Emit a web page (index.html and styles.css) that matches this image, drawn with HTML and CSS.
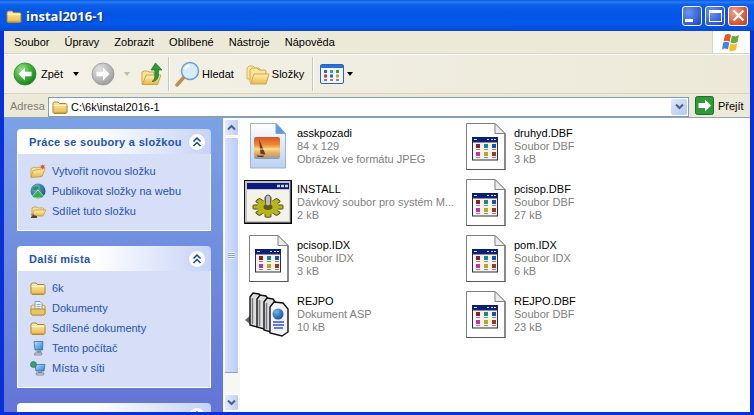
FILE: index.html
```html
<!DOCTYPE html>
<html lang="cs">
<head>
    <meta charset="UTF-8">
    <meta name="viewport" content="width=device-width, initial-scale=1.0">
    <title>instal2016-1</title>
    <link rel="stylesheet" href="styles.css">
</head>
<body>

    <svg class="svg-defs" xmlns="http://www.w3.org/2000/svg">
        <defs>
            <radialGradient id="g-green" cx="35%" cy="30%" r="80%">
                <stop offset="0" stop-color="#9be08c"/><stop offset=".5" stop-color="#3fb03a"/><stop offset="1" stop-color="#0e7a1e"/>
            </radialGradient>
            <radialGradient id="g-gray" cx="35%" cy="30%" r="80%">
                <stop offset="0" stop-color="#e2e2e2"/><stop offset=".6" stop-color="#b6b6b6"/><stop offset="1" stop-color="#939393"/>
            </radialGradient>
            <linearGradient id="g-folder" x1="0" y1="0" x2="0" y2="1">
                <stop offset="0" stop-color="#fff0b0"/><stop offset="1" stop-color="#e8b84a"/>
            </linearGradient>
            <linearGradient id="g-sunset" x1="0" y1="0" x2="0" y2="1">
                <stop offset="0" stop-color="#d9552a"/><stop offset=".35" stop-color="#ee8a35"/><stop offset=".55" stop-color="#f8d27a"/><stop offset=".75" stop-color="#e8a860"/><stop offset="1" stop-color="#7f9fb0"/>
            </linearGradient>
            <linearGradient id="g-page" x1="0" y1="0" x2="0" y2="1">
                <stop offset="0" stop-color="#ffffff"/><stop offset="1" stop-color="#bcd0f2"/>
            </linearGradient>
            <radialGradient id="g-globe" cx="35%" cy="30%" r="80%">
                <stop offset="0" stop-color="#6fb8ea"/><stop offset="1" stop-color="#0f4590"/>
            </radialGradient>
            <linearGradient id="g-monitor" x1="0" y1="0" x2="1" y2="1">
                <stop offset="0" stop-color="#b6e2fb"/><stop offset="1" stop-color="#2a7fd0"/>
            </linearGradient>

            <symbol id="i-folder" viewBox="0 0 16 16">
                <path d="M1 13.500V4.200L2.200 3h4l1.200 1.500h6.400l1.200 1v8l-1 1H2z" fill="url(#g-folder)" stroke="#a8822a" stroke-width="1"/>
                <path d="M1.500 6.500h13" stroke="#fff6cc" stroke-width="1"/>
                <path d="M2 13.800h12" stroke="#c99a36" stroke-width="1"/>
            </symbol>

            <symbol id="i-open-folder" viewBox="0 0 24 24">
                <path d="M1 17V6l2-2h4l2 2h4l1 1v10z" fill="#fbe7a6" stroke="#d6b662"/>
                <path d="M4 20V8l2-2h5l2 2h6l1 1v3" fill="#fbe49a" stroke="#cfa84a"/>
                <path d="M4.500 22L8 12h15l-3 10z" fill="url(#g-folder)" stroke="#cfa84a"/>
            </symbol>

            <symbol id="i-doc" viewBox="0 0 48 48">
                <path d="M5.500 1.500h28.500l10 10v36h-38.500z" fill="#fff" stroke="#808080"/>
                <path d="M34 1.500v10h10z" fill="#ececec" stroke="#808080"/>
                <path d="M44 11.500v36.500M5.500 47.500h38.500" stroke="#555" stroke-width="1"/>
                <rect x="11" y="15" width="26" height="5" fill="#0a1f7a"/>
                <rect x="11.500" y="20" width="25" height="18" fill="#f6f3e8" stroke="#2a2a4c" stroke-width="1"/>
                <path d="M13 17.500h3M26 17.500h2M30 17.500h2M33 17.500h2" stroke="#d8d8ee" stroke-width="1.200"/>
                <rect x="15" y="22" width="4" height="4" fill="#8a1f2f"/><rect x="23" y="22" width="4" height="4" fill="#148a90"/><rect x="31" y="22" width="4" height="4" fill="#1c4fb0"/>
                <rect x="15" y="30" width="4" height="4" fill="#c32fa8"/><rect x="23" y="30" width="4" height="4" fill="#b7a81b"/><rect x="31" y="30" width="4" height="4" fill="#a8341f"/>
                <path d="M15 27.500h4M23 27.500h4M31 27.500h4M15 35.500h4M23 35.500h4M31 35.500h4" stroke="#8a8a9a" stroke-width="1"/>
            </symbol>

            <symbol id="i-picture" viewBox="0 0 48 48">
                <path d="M6.500 1.500h25.500l9.500 10v34.500h-35z" fill="url(#g-page)" stroke="#9db2d8"/>
                <path d="M32 1.500v10h9.500z" fill="#5c9ae0" stroke="#7ba2d8"/>
                <rect x="10" y="15" width="26" height="22" rx="2" fill="url(#g-sunset)"/>
                <path d="M15 17l1.500 15 5 .5zM12.500 33.500h8l-1.500 1.500h-5z" fill="#6d3a26"/>
                <path d="M11 27h24" stroke="#fbe3a4" stroke-width="1"/>
            </symbol>

            <symbol id="i-batch" viewBox="0 0 48 44">
                <rect x=".5" y=".5" width="47" height="43" fill="#c4c4c4" stroke="#111"/>
                <path d="M1 43.200h47M47.200 1v43" stroke="#000" stroke-width="1.500"/>
                <rect x="3" y="3" width="42" height="6" fill="#0a1a80"/>
                <path d="M33 6h3M37 6h3M41 6h3" stroke="#d0d0d0" stroke-width="2.500"/>
                <rect x="3" y="10" width="42" height="31" fill="#f4f3ea"/>
                <g transform="translate(24 27) scale(1 .68)" fill="#b8b41c" stroke="#3c3a10" stroke-width="1">
                    <rect x="-3" y="-15" width="6" height="30" rx="1"/>
                    <rect x="-3" y="-15" width="6" height="30" rx="1" transform="rotate(45)"/>
                    <rect x="-3" y="-15" width="6" height="30" rx="1" transform="rotate(90)"/>
                    <rect x="-3" y="-15" width="6" height="30" rx="1" transform="rotate(135)"/>
                    <circle r="11" stroke="none"/>
                    <circle r="4.500" fill="#5f5c14" stroke="none"/>
                </g>
                <rect x="21.500" y="15" width="5" height="11" rx="2.500" fill="#bdbdbd" stroke="#555"/>
            </symbol>

            <symbol id="i-asp" viewBox="0 0 48 48">
                <path d="M1 30l6-5v10z" fill="#666"/>
                <g fill="#dedede" stroke="#111" stroke-width="1.400">
                    <path d="M6 7l3-4 6 1 3 4v26l-5 3-7-2z"/>
                    <path d="M13 9l3-4 6 1 3 4v26l-5 3-7-2z"/>
                    <path d="M20 12l3-4 6 1 3 4v26l-5 3-7-2z"/>
                </g>
                <path d="M8.500 8v26M15.500 10v26M22.500 13v26" stroke="#7c7c7c" stroke-width="1.500"/>
                <path d="M26 17l4-5 9 1 5 6v23l-6 4-12-3z" fill="#f1f4fb" stroke="#111" stroke-width="1.400"/>
                <circle cx="34" cy="24" r="5.500" fill="url(#g-globe)"/>
                <path d="M29 32h11M29 35h11M30 38h9" stroke="#3a4fd0" stroke-width="1.500"/>
            </symbol>

            <symbol id="i-folder-new" viewBox="0 0 16 16">
                <path d="M1 14V5.500L5 4l1 1 6-1.500 1 1.500-1 8z" fill="#fbe49a" stroke="#b79a4a" stroke-width=".8"/>
                <path d="M1 14.500l2-7 12-2-3 8z" fill="url(#g-folder)" stroke="#c49a3a" stroke-width=".8"/>
                <path d="M12.500.5l.6 2 2-.8-1.200 1.800 1.600 1.200-2.100.1-.5 2-.9-1.900-2 .4 1.500-1.500-1.100-1.700 2 .6z" fill="#e8491a"/>
            </symbol>

            <symbol id="i-globe" viewBox="0 0 16 16">
                <circle cx="8" cy="8" r="7.500" fill="url(#g-globe)"/>
                <path d="M3 4c2-1 4-1 5 0s-1 3-3 3-3 0-2-3zM10 3c2 0 3 2 3 3l-2 1z" fill="#2c9a3c"/>
                <path d="M8 7l6 6.500-2 1.500H4l-2-1.500z" fill="#35b04a" stroke="#e6f5e0" stroke-width=".7"/>
            </symbol>

            <symbol id="i-folder-share" viewBox="0 0 16 16">
                <path d="M2 12V5l2-1h3l1 1h5l1 1v2" fill="#fbe49a" stroke="#b79a4a" stroke-width=".8"/>
                <path d="M2 13l2-6h12l-3 6z" fill="url(#g-folder)" stroke="#c49a3a" stroke-width=".8"/>
                <path d="M1 14l2-2 2 .5 2 .5v2H1z" fill="#4a4636"/>
                <path d="M1 12c2-1 3-1 4 1" stroke="#8c7838" fill="none"/>
            </symbol>

            <symbol id="i-my-docs" viewBox="0 0 16 16">
                <path d="M1 14V6l2-1h10l2 1v8l-1 1H2z" fill="url(#g-folder)" stroke="#b08a2c" stroke-width=".8"/>
                <path d="M5 1.500h5l2 2v6H5z" fill="#eef3fb" stroke="#6a86b8" stroke-width=".8"/>
                <path d="M6.500 4.500h4M6.500 6.500h4M6.500 8.500h4" stroke="#7b97c8" stroke-width=".8"/>
                <path d="M1 9h14v5l-1 1H2l-1-1z" fill="#e7c564" stroke="#b08a2c" stroke-width=".8"/>
            </symbol>

            <symbol id="i-computer" viewBox="0 0 16 16">
                <path d="M4 1.500h9l-.5 8.500H5z" fill="url(#g-monitor)" stroke="#2c5f9e" stroke-width=".7"/>
                <path d="M6.500 10.500h4.500l.5 2H6.500z" fill="#7c8ea8"/>
                <path d="M5 13h7l-.5 2H4.500z" fill="#d8dee8" stroke="#556" stroke-width=".6"/>
            </symbol>

            <symbol id="i-network" viewBox="0 0 16 16">
                <path d="M5 4.500h10l-1 6.500H6z" fill="url(#g-monitor)" stroke="#2c5f9e" stroke-width=".7"/>
                <circle cx="3.500" cy="4.500" r="3" fill="#3aa64a" stroke="#1d6ab0" stroke-width=".7"/>
                <path d="M8 11.500h4v1.500H8z" fill="#7c8ea8"/>
                <path d="M6 13h8l-.5 2H6.500z" fill="#d8dee8" stroke="#556" stroke-width=".6"/>
            </symbol>

            <symbol id="i-chevrons-up" viewBox="0 0 18 18">
                <circle cx="9" cy="9" r="8.500" fill="#fff" stroke="#c6d2f0"/>
                <path d="M5.500 8.500L9 5l3.500 3.500M5.500 13L9 9.500l3.500 3.500" fill="none" stroke="#16418f" stroke-width="1.500"/>
            </symbol>
        </defs>
    </svg>

    <div class="window">
        <div class="titlebar">
            <svg class="title-icon" width="16" height="16"><use href="#i-folder"/></svg>
            <span class="title-text">instal2016-1</span>
            <div class="win-buttons">
                <span class="win-btn"><span class="min-glyph"></span></span>
                <span class="win-btn"><span class="max-glyph"></span></span>
                <span class="win-btn close">
                    <svg width="13" height="13" viewBox="0 0 13 13"><path d="M1.500 1.500l10 10M11.500 1.500l-10 10" stroke="#fff" stroke-width="2.200"/></svg>
                </span>
            </div>
        </div>

        <div class="frame">
            <div class="menubar">
                <span class="menu-item">Soubor</span>
                <span class="menu-item">Úpravy</span>
                <span class="menu-item">Zobrazit</span>
                <span class="menu-item">Oblíbené</span>
                <span class="menu-item">Nástroje</span>
                <span class="menu-item">Nápověda</span>
                <div class="logo-box">
                    <svg width="22" height="19" viewBox="0 0 22 19">
                        <path d="M4 2c2-1.500 4-1.500 6 0l-1.500 7C6.500 7.500 4.500 7.500 2.500 8.500z" fill="#e8562a"/>
                        <path d="M11 2.500c2 1.200 4 1.200 7-.5l-1.500 7c-3 1.500-5 1.500-7 .3z" fill="#5fae3a"/>
                        <path d="M2.300 9.500c2-1 4-1 6 .3L7 16.500c-2-1.300-4-1.300-6-.3z" fill="#3f86d8"/>
                        <path d="M9.300 10.500c2 1.200 4 1.200 7-.3L15 17c-3 1.500-5 1.500-7 .2z" fill="#f3c02a"/>
                    </svg>
                </div>
            </div>

            <div class="toolbar">
                <svg class="nav-btn" width="24" height="24" viewBox="0 0 24 24">
                    <circle cx="12" cy="12" r="11" fill="url(#g-green)" stroke="#2a8a30" stroke-width=".8"/>
                    <path d="M12 5.500L5.500 12l6.500 6.500v-4.200h6.500v-4.600H12z" fill="#fff"/>
                </svg>
                <span class="tool-label back-label">Zpět</span>
                <span class="caret back-caret"></span>
                <svg class="nav-btn forward" width="24" height="24" viewBox="0 0 24 24">
                    <circle cx="12" cy="12" r="11" fill="url(#g-gray)" stroke="#9a9a9a" stroke-width=".8"/>
                    <path d="M12 5.500l6.500 6.500-6.500 6.500v-4.200H5.500v-4.600H12z" fill="#fff"/>
                </svg>
                <span class="caret disabled"></span>
                <svg class="up-icon" width="22" height="24" viewBox="0 0 22 24">
                    <path d="M1 22V10l2-1h4l1 1h5v4l-2 8z" fill="#fbe49a" stroke="#c9a24a"/>
                    <path d="M1.500 22.500L5 13h15l-3.500 9.500z" fill="url(#g-folder)" stroke="#c9a24a"/>
                    <path d="M14.500 1L21 8h-3.500v5c0 4-3 6.500-6.500 6.500 2-1 2.800-3 2.800-6V8H10z" fill="#2d9b35" stroke="#186e22" stroke-width=".7"/>
                </svg>
                <span class="tool-sep first"></span>
                <svg class="search-icon" width="25" height="26" viewBox="0 0 25 26">
                    <path d="M2 24l8-9" stroke="#c98a4a" stroke-width="3.500" stroke-linecap="round"/>
                    <circle cx="15" cy="10" r="8.500" fill="#d6ecfb" stroke="#6e9cc8" stroke-width="1.500"/>
                    <path d="M10.500 8a5 5 0 0 1 4-3.500" stroke="#fff" stroke-width="2" fill="none"/>
                </svg>
                <span class="tool-label">Hledat</span>
                <svg class="folders-icon" width="24" height="24"><use href="#i-open-folder"/></svg>
                <span class="tool-label">Složky</span>
                <span class="tool-sep second"></span>
                <svg class="views-icon" width="24" height="20" viewBox="0 0 24 20">
                    <rect x=".5" y=".5" width="23" height="19" rx="1.500" fill="#f2f6fd" stroke="#2a63c4"/>
                    <rect x="1" y="1" width="22" height="3" fill="#2f6ed4"/>
                    <rect x="4" y="6" width="3" height="3" fill="#3a5fc4"/><rect x="10" y="6" width="3" height="3" fill="#3aa0b0"/><rect x="16" y="6" width="3" height="3" fill="#3a9a4a"/>
                    <rect x="4" y="10.500" width="3" height="3" fill="#c83a3a"/><rect x="10" y="10.500" width="3" height="3" fill="#3a5fc4"/><rect x="16" y="10.500" width="3" height="3" fill="#c8a23a"/>
                    <rect x="4" y="15" width="3" height="2" fill="#8a6ac4"/><rect x="10" y="15" width="3" height="2" fill="#c87a3a"/><rect x="16" y="15" width="3" height="2" fill="#8a8a8a"/>
                </svg>
                <span class="caret views-caret"></span>
            </div>

            <div class="addressbar">
                <span class="address-label">Adresa</span>
                <div class="address-input">
                    <svg width="16" height="16"><use href="#i-folder"/></svg>
                    <span class="address-text">C:\6k\instal2016-1</span>
                    <span class="address-drop">
                        <svg width="9" height="7" viewBox="0 0 9 7"><path d="M1 1.500l3.500 3.500L8 1.500" fill="none" stroke="#4d6185" stroke-width="2"/></svg>
                    </span>
                </div>
                <svg class="go-icon" width="19" height="19" viewBox="0 0 19 19">
                    <rect x=".5" y=".5" width="18" height="18" rx="2" fill="#2f9a3a" stroke="#1c6e28"/>
                    <path d="M10 3.500L16 9.500l-6 6v-3.500H3.500V7H10z" fill="#fff"/>
                </svg>
                <span class="go-label">Přejít</span>
            </div>

            <div class="content">
                <div class="sidebar">
                    <div class="task-box">
                        <div class="task-head">
                            <span class="task-title">Práce se soubory a složkou</span>
                            <svg width="18" height="18"><use href="#i-chevrons-up"/></svg>
                        </div>
                        <div class="task-body">
                            <div class="task-item"><svg width="16" height="16"><use href="#i-folder-new"/></svg>Vytvořit novou složku</div>
                            <div class="task-item"><svg width="16" height="16"><use href="#i-globe"/></svg>Publikovat složky na webu</div>
                            <div class="task-item"><svg width="16" height="16"><use href="#i-folder-share"/></svg>Sdílet tuto složku</div>
                        </div>
                    </div>
                    <div class="task-box">
                        <div class="task-head">
                            <span class="task-title">Další místa</span>
                            <svg width="18" height="18"><use href="#i-chevrons-up"/></svg>
                        </div>
                        <div class="task-body">
                            <div class="task-item"><svg width="16" height="16"><use href="#i-folder"/></svg>6k</div>
                            <div class="task-item"><svg width="16" height="16"><use href="#i-my-docs"/></svg>Dokumenty</div>
                            <div class="task-item"><svg width="16" height="16"><use href="#i-folder"/></svg>Sdílené dokumenty</div>
                            <div class="task-item"><svg width="16" height="16"><use href="#i-computer"/></svg>Tento počítač</div>
                            <div class="task-item"><svg width="16" height="16"><use href="#i-network"/></svg>Místa v síti</div>
                        </div>
                    </div>
                    <div class="task-box">
                        <div class="task-head">
                            <span class="task-title">Podrobnosti</span>
                            <svg width="18" height="18"><use href="#i-chevrons-up"/></svg>
                        </div>
                    </div>
                </div>

                <div class="scrollbar">
                    <span class="scroll-btn">
                        <svg width="9" height="7" viewBox="0 0 9 7"><path d="M1 5.500L4.500 2 8 5.500" fill="none" stroke="#4d6185" stroke-width="2"/></svg>
                    </span>
                    <span class="scroll-thumb">
                        <span class="grip"></span>
                    </span>
                    <span class="scroll-track"></span>
                    <span class="scroll-btn">
                        <svg width="9" height="7" viewBox="0 0 9 7"><path d="M1 1.500L4.500 5 8 1.500" fill="none" stroke="#4d6185" stroke-width="2"/></svg>
                    </span>
                </div>

                <div class="files">
                    <div class="tile">
                        <svg width="48" height="48"><use href="#i-picture"/></svg>
                        <div class="tile-text"><span class="tile-name">asskpozadi</span><span>84 x 129</span><span>Obrázek ve formátu JPEG</span></div>
                    </div>
                    <div class="tile">
                        <svg width="48" height="48"><use href="#i-doc"/></svg>
                        <div class="tile-text"><span class="tile-name">druhyd.DBF</span><span>Soubor DBF</span><span>3 kB</span></div>
                    </div>
                    <div class="tile">
                        <svg class="batch-icon" width="48" height="44"><use href="#i-batch"/></svg>
                        <div class="tile-text"><span class="tile-name">INSTALL</span><span>Dávkový soubor pro systém M...</span><span>2 kB</span></div>
                    </div>
                    <div class="tile">
                        <svg width="48" height="48"><use href="#i-doc"/></svg>
                        <div class="tile-text"><span class="tile-name">pcisop.DBF</span><span>Soubor DBF</span><span>27 kB</span></div>
                    </div>
                    <div class="tile">
                        <svg width="48" height="48"><use href="#i-doc"/></svg>
                        <div class="tile-text"><span class="tile-name">pcisop.IDX</span><span>Soubor IDX</span><span>3 kB</span></div>
                    </div>
                    <div class="tile">
                        <svg width="48" height="48"><use href="#i-doc"/></svg>
                        <div class="tile-text"><span class="tile-name">pom.IDX</span><span>Soubor IDX</span><span>6 kB</span></div>
                    </div>
                    <div class="tile">
                        <svg width="48" height="48"><use href="#i-asp"/></svg>
                        <div class="tile-text"><span class="tile-name">REJPO</span><span>Dokument ASP</span><span>10 kB</span></div>
                    </div>
                    <div class="tile">
                        <svg width="48" height="48"><use href="#i-doc"/></svg>
                        <div class="tile-text"><span class="tile-name">REJPO.DBF</span><span>Soubor DBF</span><span>23 kB</span></div>
                    </div>
                </div>
            </div>
        </div>
    </div>

</body>
</html>
```

FILE: styles.css
```css
* {
    margin: 0;
    padding: 0;
    box-sizing: border-box;
    font-family: "Liberation Sans", Arial, sans-serif;
    font-size: 11px;
}
body {
    width: 754px;
    height: 415px;
    overflow: hidden;
    background: #0831d9;
}
svg {
    flex-shrink: 0;
    display: block;
}
.svg-defs {
    width: 0;
    height: 0;
}
.window {
    display: flex;
    flex-direction: column;
    height: 415px;
}

/* title bar */
.titlebar {
    display: flex;
    align-items: center;
    height: 31px;
    padding: 0 6px 0 6px;
    background: linear-gradient(#0a5ae6 0, #2a7cf4 2px, #0a5ee8 5px, #0355e6 14px, #0358ea 24px, #0349d0 31px);
}
.title-text {
    margin-left: 4px;
    color: #fff;
    font-size: 13px;
    font-weight: bold;
    font-family: "Open Sans", sans-serif;
    text-shadow: 1px 1px 1px #0a2a80;
}
.win-buttons {
    display: flex;
    gap: 3px;
    margin-left: auto;
}
.win-btn {
    display: flex;
    align-items: center;
    justify-content: center;
    width: 20px;
    height: 20px;
    border: 1px solid #fff;
    border-radius: 3px;
    background: radial-gradient(circle at 30% 30%, #6d95ee, #2d5bd6 70%, #2046b8);
}
.win-btn.close {
    background: radial-gradient(circle at 30% 30%, #f0a08a, #dc5a38 60%, #c23a1c);
}
.min-glyph {
    width: 8px;
    height: 3px;
    margin: 9px 6px 0 0;
    background: #fff;
}
.max-glyph {
    width: 13px;
    height: 12px;
    border: 1px solid #fff;
    border-top-width: 3px;
}

/* frame */
.frame {
    display: flex;
    flex-direction: column;
    flex: 1;
    min-height: 0;
    margin: 0 4px 3px;
    background: #ece9d8;
}
.menubar {
    display: flex;
    align-items: center;
    height: 23px;
    padding-left: 10px;
    border-bottom: 1px solid #d8d4c4;
}
.menu-item {
    margin-right: 15px;
    color: #000;
}
.logo-box {
    display: flex;
    align-items: center;
    justify-content: center;
    align-self: stretch;
    width: 38px;
    margin-left: auto;
    background: #fff;
    border-left: 1px solid #d8d4c4;
}
.toolbar {
    display: flex;
    align-items: center;
    height: 40px;
    padding-left: 9px;
    border-top: 1px solid #fff;
    border-bottom: 1px solid #d8d4c4;
    background: linear-gradient(90deg, #f4f2e8, #ece9d8);
}
.tool-label {
    color: #000;
    margin-left: 2px;
}
.back-label {
    margin-left: 4px;
}
.caret {
    width: 0;
    height: 0;
    border-left: 3.5px solid transparent;
    border-right: 3.5px solid transparent;
    border-top: 4px solid #000;
}
.back-caret {
    margin-left: 10px;
}
.caret.disabled {
    margin-left: 9px;
    border-top-color: #c0bdae;
}
.forward {
    margin-left: 12px;
}
.up-icon {
    margin-left: 11px;
}
.tool-sep {
    width: 1px;
    height: 34px;
    background: #c9c6b6;
    box-shadow: 1px 0 0 #fff;
}
.tool-sep.first {
    margin-left: 5px;
}
.search-icon {
    margin-left: 6px;
}
.folders-icon {
    margin-left: 12px;
}
.tool-sep.second {
    margin-left: 8px;
}
.views-icon {
    margin-left: 7px;
}
.views-caret {
    margin-left: 3px;
}
.addressbar {
    display: flex;
    align-items: center;
    height: 23px;
    padding-left: 6px;
}
.address-label {
    width: 38px;
    color: #7f7c73;
}
.address-input {
    display: flex;
    align-items: center;
    width: 641px;
    height: 20px;
    margin-top: 2px;
    padding: 0 1px 0 3px;
    border: 1px solid #7f9db9;
    background: #fff;
}
.address-text {
    margin-left: 3px;
    color: #000;
}
.address-drop {
    display: flex;
    align-items: center;
    justify-content: center;
    width: 16px;
    height: 16px;
    margin-left: auto;
    border-radius: 2px;
    background: linear-gradient(135deg, #dfe8fc, #b3c8f5);
}
.go-icon {
    margin-left: 6px;
}
.go-label {
    margin-left: 4px;
    color: #000;
}

/* main area */
.content {
    display: flex;
    flex: 1;
    min-height: 0;
    border-top: 1px solid #8ea4b5;
    overflow: hidden;
}
.sidebar {
    display: flex;
    flex-direction: column;
    flex-shrink: 0;
    gap: 15px;
    width: 219px;
    padding: 11px 12px 0 13px;
    overflow: hidden;
    background: linear-gradient(#7ba2e7, #6375d6);
}
.task-box {
    flex-shrink: 0;
}
.task-head {
    display: flex;
    align-items: center;
    justify-content: space-between;
    height: 25px;
    padding: 0 5px 0 12px;
    border-radius: 4px 4px 0 0;
    background: linear-gradient(90deg, #fff, #fff 40%, #c6d3f7);
}
.task-title {
    color: #2553b0;
    font-weight: bold;
    letter-spacing: .3px;
}
.task-body {
    padding: 7px 0 9px 12px;
    border: 1px solid #fff;
    border-top: 0;
    background: #d6dff7;
}
.task-item {
    display: flex;
    align-items: center;
    gap: 6px;
    height: 20px;
    color: #2553b0;
}
.scrollbar {
    display: flex;
    flex-direction: column;
    flex-shrink: 0;
    width: 17px;
    background: #f8f8f2;
}
.scroll-btn {
    display: flex;
    align-items: center;
    justify-content: center;
    flex-shrink: 0;
    height: 17px;
    margin: 1px;
    border: 1px solid #fff;
    border-radius: 2px;
    background: linear-gradient(90deg, #e2ebfd, #bccdf6);
}
.scroll-thumb {
    display: flex;
    align-items: center;
    justify-content: center;
    flex-shrink: 0;
    height: 236px;
    margin: 0 1px;
    border: 1px solid #fff;
    border-bottom-color: #8aa0d0;
    border-radius: 2px;
    background: linear-gradient(90deg, #d4e0fd, #bccdf6);
}
.grip {
    width: 7px;
    height: 7px;
    background: repeating-linear-gradient(#eef3ff 0 1px, #8aa0d0 1px 2px);
}
.scroll-track {
    flex: 1;
}
.files {
    display: grid;
    flex: 1;
    grid-template-columns: 217px 217px;
    grid-auto-rows: 56px;
    align-content: start;
    padding: 4px 0 0 4px;
    background: #fff;
}
.tile {
    display: flex;
    align-items: flex-start;
    gap: 5px;
}
.batch-icon {
    margin-top: 2px;
}
.tile-text {
    display: flex;
    flex-direction: column;
    padding-top: 5px;
    white-space: nowrap;
    color: #808080;
}
.tile-text span {
    line-height: 13px;
}
.tile-name {
    color: #000;
}
```
